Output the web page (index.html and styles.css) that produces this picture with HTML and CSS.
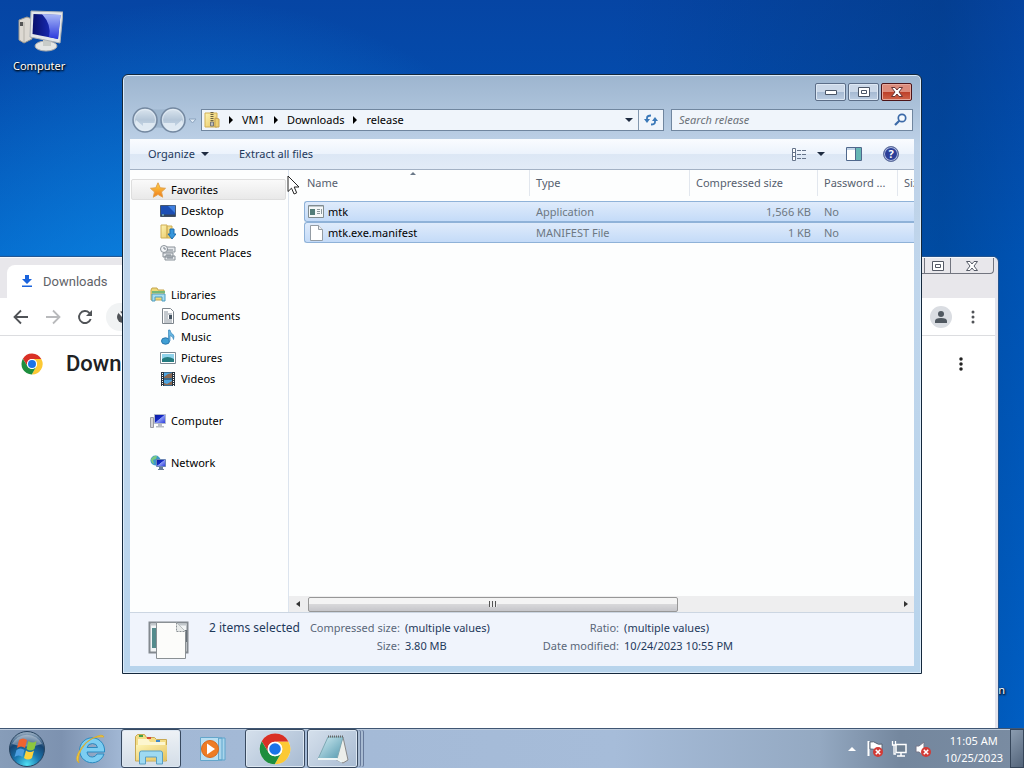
FILE: index.html
```html
<!DOCTYPE html>
<html lang="en">
<head>
    <meta charset="UTF-8">
    <meta name="viewport" content="width=device-width, initial-scale=1.0">
    <title>release</title>
    <link rel="stylesheet" href="styles.css">
</head>
<body>
    <!-- Shared icons -->
    <svg class="defs" aria-hidden="true">
        <defs>
            <linearGradient id="screen" x1="0" y1="0" x2="1" y2="1">
                <stop offset="0" stop-color="#0a1a9c"/>
                <stop offset=".45" stop-color="#1428c4"/>
                <stop offset=".5" stop-color="#8c9cf4"/>
                <stop offset="1" stop-color="#2434dc"/>
            </linearGradient>
            <linearGradient id="folder" x1="0" y1="0" x2="1" y2="1">
                <stop offset="0" stop-color="#fdf4b4"/>
                <stop offset="1" stop-color="#e6c25c"/>
            </linearGradient>
            <linearGradient id="orange" x1="0" y1="0" x2="0" y2="1">
                <stop offset="0" stop-color="#ffd94a"/>
                <stop offset="1" stop-color="#f07818"/>
            </linearGradient>
            <linearGradient id="silver" x1="0" y1="0" x2="0" y2="1">
                <stop offset="0" stop-color="#dde7f0"/>
                <stop offset=".5" stop-color="#b4c6d8"/>
                <stop offset="1" stop-color="#d3e2ef"/>
            </linearGradient>
            <radialGradient id="orb" cx=".5" cy=".95" r=".9">
                <stop offset="0" stop-color="#4fe0f4"/>
                <stop offset=".4" stop-color="#1a78b0"/>
                <stop offset=".75" stop-color="#164472"/>
                <stop offset="1" stop-color="#8fa6bc"/>
            </radialGradient>
            <linearGradient id="note" x1="0" y1="0" x2="1" y2="1">
                <stop offset="0" stop-color="#d4eef4"/>
                <stop offset="1" stop-color="#5298ae"/>
            </linearGradient>
            <linearGradient id="glass" x1="0" y1="0" x2="1" y2="0">
                <stop offset="0" stop-color="#07106c"/>
                <stop offset="1" stop-color="#2038d8"/>
            </linearGradient>
            <linearGradient id="glare" x1="0" y1="0" x2="0" y2="1">
                <stop offset="0" stop-color="#a8b8f8"/>
                <stop offset="1" stop-color="#2a38dc"/>
            </linearGradient>
        </defs>
        <symbol id="chrome" viewBox="0 0 48 48">
            <circle cx="24" cy="24" r="23" fill="#fff"/>
            <path d="M24 13h20.3A23 23 0 0 0 4.1 12.500L14.500 29.500A11 11 0 0 1 24 13z" fill="#d93025"/>
            <path d="M44.300 13H24a11 11 0 0 1 9.500 16.500L23.500 47A23 23 0 0 0 44.300 13z" fill="#fcc934"/>
            <path d="M4.100 12.500A23 23 0 0 0 23.500 47l10-17.500a11 11 0 0 1-19 0z" fill="#1e8e3e"/>
            <circle cx="24" cy="24" r="11" fill="#fff"/>
            <circle cx="24" cy="24" r="8.700" fill="#1a73e8"/>
        </symbol>
        <symbol id="alert" viewBox="0 0 9 9">
            <circle cx="4.500" cy="4.500" r="4.500" fill="#d33a35"/>
            <path d="M2.500 2.500l4 4m0-4l-4 4" stroke="#fff" stroke-width="1.400"/>
        </symbol>
    </svg>

    <main class="desktop">
        <div class="desktop-icon computer">
            <svg width="48" height="42" viewBox="0 0 48 42" aria-hidden="true">
                <path d="M4 10l8-3 5 2v20l-8 4-5-3z" fill="#ddd9d2" stroke="#9b9890"/>
                <path d="M9 12v20" stroke="#b5b2aa"/><path d="M5 12h3v4H5z" fill="#555"/>
                <ellipse cx="31" cy="36" rx="11" ry="5" fill="#e4e6e4" stroke="#aaa"/>
                <path d="M28 30h8v6h-8z" fill="#c8ccc8"/>
                <path d="M16 1l32 1-3 31-30-6z" fill="#e2e6ea" stroke="#aab0b4"/>
                <path d="M18.500 4l27 1-2.500 24-25.500-5z" fill="url(#glass)"/>
                <path d="M27 4l18.500 1-2.500 24-9-2q3-12-7-23z" fill="url(#glare)"/>
            </svg>
            <span>Computer</span>
        </div>
        <div class="desktop-icon recycle"><span>Recycle Bin</span></div>

        <!-- Browser window -->
        <section class="browser">
            <header class="tab-strip">
                <div class="tab">
                    <svg width="12" height="13" viewBox="0 0 12 13" aria-hidden="true"><path d="M4 0h4v4h3L6 9 1 4h3zM1 10.500h10V12H1z" fill="#1a63dc"/></svg>
                    <span>Downloads</span>
                </div>
                <div class="browser-controls">
                    <button type="button" aria-label="Minimize"></button>
                    <button type="button" aria-label="Maximize"><svg width="12" height="10" viewBox="0 0 12 10"><path d="M.5.5h11v9H.5zM3.500 3.500h5v3h-5z" fill="#fff" stroke="#555a66"/></svg></button>
                    <button type="button" aria-label="Close" class="wide"><svg width="12" height="10" viewBox="0 0 12 10"><path d="M.5.5h3.500l2 2.500 2-2.500h3.500L8 5l3.500 4.500H8L6 7 4 9.500H.5L4 5z" fill="#fff" stroke="#555a66"/></svg></button>
                </div>
            </header>
            <div class="browser-bar">
                <button type="button" aria-label="Back"><svg width="16" height="16" viewBox="0 0 16 16"><path d="M15 8H2M8 1.500L1.500 8 8 14.500" fill="none" stroke="#505357" stroke-width="1.800"/></svg></button>
                <button type="button" aria-label="Forward"><svg width="16" height="16" viewBox="0 0 16 16"><path d="M1 8h13M8 1.500L14.500 8 8 14.500" fill="none" stroke="#b9babc" stroke-width="1.800"/></svg></button>
                <button type="button" aria-label="Reload"><svg width="16" height="16" viewBox="0 0 16 16"><path d="M13.700 10A6 6 0 1 1 12.300 3.800L14 5.500" fill="none" stroke="#505357" stroke-width="1.900"/><path d="M15 1v6H9z" fill="#505357"/></svg></button>
                <div class="omnibox"><svg width="14" height="14" viewBox="0 0 14 14" aria-hidden="true"><circle cx="7" cy="7" r="6" fill="#505357"/><path d="M3 2l8 9" stroke="#f1f3f4" stroke-width="2"/></svg></div>
                <button type="button" aria-label="Profile" class="avatar"><svg width="14" height="14" viewBox="0 0 14 14"><circle cx="7" cy="4" r="3" fill="#505860"/><path d="M1 13v-2q0-3 6-3t6 3v2z" fill="#505860"/></svg></button>
                <button type="button" aria-label="Menu" class="menu"><svg width="4" height="14" viewBox="0 0 4 14"><path d="M2 2h0M2 7h0M2 12h0" stroke="#505357" stroke-width="3" stroke-linecap="round"/></svg></button>
            </div>
            <div class="page-header">
                <svg width="22" height="22" aria-hidden="true"><use href="#chrome"/></svg>
                <h1>Downloads</h1>
                <button type="button" aria-label="More actions"><svg width="4" height="14" viewBox="0 0 4 14"><path d="M2 2h0M2 7h0M2 12h0" stroke="#222" stroke-width="3.500" stroke-linecap="round"/></svg></button>
            </div>
        </section>

        <!-- Explorer window -->
        <section class="explorer">
            <div class="titlebar">
                <button type="button" aria-label="Minimize"><svg width="12" height="6" viewBox="0 0 12 6"><path d="M.5 1.500h11v4H.5z" fill="#fff" stroke="#4a5566"/></svg></button>
                <button type="button" aria-label="Maximize"><svg width="12" height="10" viewBox="0 0 12 10"><path d="M.5.5h11v9H.5zM3.500 3.500h5v3h-5z" fill="#fff" stroke="#4a5566"/></svg></button>
                <button type="button" aria-label="Close" class="close"><svg width="12" height="10" viewBox="0 0 12 10"><path d="M.5.5h3.500l2 2.500 2-2.500h3.500L8 5l3.500 4.500H8L6 7 4 9.500H.5L4 5z" fill="#fff" stroke="#693434"/></svg></button>
            </div>

            <div class="nav-row">
                <div class="history">
                    <svg width="66" height="28" viewBox="0 0 66 28" aria-hidden="true">
                        <path d="M12 2q15 3 30 0v22q-15-5-30 0z" fill="#9db5cd"/>
                        <circle cx="14" cy="14" r="12" fill="url(#silver)" stroke="#7488a0" stroke-width="1.500"/>
                        <circle cx="42" cy="14" r="12" fill="url(#silver)" stroke="#7488a0" stroke-width="1.500"/>
                        <path d="M5 14l7 6v-3h12q-4 8-10 8T4 18zM51 14l-7 6v-3H32q4 8 10 8t10-7z" fill="#dfe9f2"/>
                        <circle cx="14" cy="14" r="10.500" fill="none" stroke="#e7f0f7" opacity=".7"/>
                        <circle cx="42" cy="14" r="10.500" fill="none" stroke="#e7f0f7" opacity=".7"/>
                        <path d="M58 13h7l-3.500 4z" fill="#dfeaf5" stroke="#8ba3be"/>
                    </svg>
                </div>
                <div class="address">
                    <svg width="16" height="16" viewBox="0 0 16 16" aria-hidden="true"><path d="M1 1h12v14H1z" fill="url(#folder)" stroke="#d3b055"/><path d="M11 6l4 1v8h-4z" fill="#edcf70" stroke="#c4a050"/><path d="M8 0v14" stroke="#6b6141" stroke-width="3" stroke-dasharray="1 1"/><path d="M6.500 10h3v4h-3z" fill="#bbb" stroke="#777"/></svg>
                    <i class="crumb-arrow"></i>
                    <button type="button">VM1</button>
                    <i class="crumb-arrow"></i>
                    <button type="button">Downloads</button>
                    <i class="crumb-arrow"></i>
                    <button type="button">release</button>
                    <i class="down-arrow"></i>
                    <button type="button" class="refresh" aria-label="Refresh"><svg width="14" height="14" viewBox="0 0 14 14"><path d="M3 8V5q0-2.500 4-2.500M11 6v3q0 2.500-4 2.500" fill="none" stroke="#3a78b8" stroke-width="1.800"/><path d="M0 6h6L3 10zM8 8h6l-3-4z" fill="#3a78b8"/></svg></button>
                </div>
                <div class="search">
                    <input type="search" placeholder="Search release" aria-label="Search release">
                    <svg width="13" height="13" viewBox="0 0 13 13" aria-hidden="true"><circle cx="8" cy="5" r="3.700" fill="#f6fafe" stroke="#3c6aa8" stroke-width="1.700"/><path d="M5.300 7.700L1 12" stroke="#3c6aa8" stroke-width="2.200"/></svg>
                </div>
            </div>

            <div class="toolbar">
                <button type="button" class="organize">Organize<i class="down-arrow"></i></button>
                <button type="button">Extract all files</button>
                <div class="toolbar-icons">
                    <button type="button" aria-label="Views"><svg width="15" height="13" viewBox="0 0 15 13"><path d="M.5.5h3v12h-3zM.5 4.500h3M.5 8.500h3" fill="#fff" stroke="#66748a"/><path d="M5 2.500h10M5 6.500h10M5 10.500h10" stroke="#66748a" stroke-dasharray="4 1"/></svg></button>
                    <button type="button" aria-label="More views"><i class="down-arrow"></i></button>
                    <button type="button" aria-label="Preview pane"><svg width="16" height="14" viewBox="0 0 16 14"><path d="M.5.5h15v13H.5z" fill="#fff" stroke="#50688c"/><path d="M1 1h9v2H1z" fill="#c3d5e8"/><path d="M9.500 1v12.500" stroke="#50688c"/><path d="M10 1h5v12h-5z" fill="#65b6b4"/></svg></button>
                    <button type="button" aria-label="Help" class="help">?</button>
                </div>
            </div>

            <div class="panes">
                <nav class="sidebar">
                    <a href="#" class="group active"><svg width="16" height="16" viewBox="0 0 16 16"><path d="M8 .8l2.200 5 5.300.5-4 3.600 1.200 5.300L8 12.400l-4.700 2.800 1.200-5.300-4-3.600 5.300-.5z" fill="url(#orange)" stroke="#e2a04c"/></svg>Favorites</a>
                    <a href="#"><svg width="16" height="16" viewBox="0 0 16 16"><path d="M.5 2.500h15v11H.5z" fill="#1c4fb4" stroke="#46586e"/><path d="M8 3l7-.5V10z" fill="#3d7fe0"/><path d="M1 12.500h14" stroke="#36465c" stroke-width="2"/><path d="M2 12h2" stroke="#8de0e8"/></svg>Desktop</a>
                    <a href="#"><svg width="16" height="16" viewBox="0 0 16 16"><path d="M1 1h6v13H1zM7 2h5v12H7z" fill="url(#folder)" stroke="#cfae55"/><path d="M10 5h4v5h2l-4 5-4-5h2z" fill="#3797dc" stroke="#1d6dad"/></svg>Downloads</a>
                    <a href="#"><svg width="16" height="16" viewBox="0 0 16 16"><path d="M5 2h10v5H5zM3 8h10v4H3zM5 11h10v4H5z" fill="#e6e9ec" stroke="#8a9299"/><circle cx="4" cy="4" r="3.500" fill="#f4f6f8" stroke="#8a9299"/><path d="M4 2v2h2M7 5h6M6 10h5M7 13h6" stroke="#77808a" fill="none"/></svg>Recent Places</a>

                    <a href="#" class="group"><svg width="16" height="16" viewBox="0 0 16 16"><path d="M1 3l1-2h5l1 2h6v10H1z" fill="#efd978" stroke="#c4a54e"/><path d="M2 5h13" stroke="#75b87a" stroke-width="2"/><path d="M2 7h13v7h-3v-4H5v4H2z" fill="#a8ddf0" stroke="#4f9dc0"/></svg>Libraries</a>
                    <a href="#"><svg width="16" height="16" viewBox="0 0 16 16"><path d="M2.500.5h8l3 3v12h-11z" fill="#fff" stroke="#7d858c"/><path d="M4 4h4M4 6h8M4 12h8M4 14h8M4 8h4M4 10h4" stroke="#88929c"/><path d="M9 7h3v4H9z" fill="#465462"/></svg>Documents</a>
                    <a href="#"><svg width="16" height="16" viewBox="0 0 16 16"><ellipse cx="5.500" cy="12" rx="4" ry="3.200" fill="#3f9fd4" stroke="#2b76ac"/><path d="M8.500 12V1h1.500q0 2.500 2.500 4t1 5.500q0-3-3.500-4V12z" fill="#65b5e0" stroke="#3985ba" stroke-width=".7"/></svg>Music</a>
                    <a href="#"><svg width="16" height="16" viewBox="0 0 16 16"><path d="M.5 2.500h15v11H.5z" fill="#fff" stroke="#7c8a94"/><path d="M2 4h12v8H2z" fill="#8fd2ea"/><path d="M2 9q5-4 12 0v3H2z" fill="#257c80"/></svg>Pictures</a>
                    <a href="#"><svg width="16" height="16" viewBox="0 0 16 16"><path d="M1 1h14v14H1z" fill="#26313c"/><path d="M4 1.500h8v6H4zM4 8.500h8v6H4z" fill="#4ea5e0"/><path d="M4 6l4-3 4-1v5H4zM4 12l3 1 5-3v4H4z" fill="#8a6a54"/><path d="M2.500 2v13M13.500 2v13" stroke="#fff" stroke-dasharray="1 1"/></svg>Videos</a>

                    <a href="#" class="group"><svg width="16" height="16" viewBox="0 0 16 16"><path d="M.5 4.500h3v10h-3z" fill="#d4d4d8" stroke="#989aa2"/><path d="M4.500 1.500h11v9h-11z" fill="url(#screen)" stroke="#b0b8ca"/><path d="M8 11h4v2h2v1.500H6V13h2z" fill="#b8bcc4"/></svg>Computer</a>

                    <a href="#" class="group"><svg width="16" height="16" viewBox="0 0 16 16"><circle cx="5.500" cy="5.500" r="5" fill="#3c98ca"/><path d="M1 4q3-4 6-3l-1 3-3 1 1 4q-3-1-3-5z" fill="#7cca80"/><path d="M6.500 4.500h9v7h-9z" fill="url(#screen)" stroke="#6c86b4"/><path d="M9 12h4v2h1v1H8v-1h1z" fill="#677e98"/></svg>Network</a>
                </nav>

                <div class="content">
                    <div class="files">
                        <table>
                            <thead>
                                <tr>
                                    <th class="col-name sorted">Name</th>
                                    <th class="col-type">Type</th>
                                    <th class="col-size">Compressed size</th>
                                    <th class="col-pass">Password ...</th>
                                    <th class="col-full">Size</th>
                                </tr>
                            </thead>
                            <tbody>
                                <tr>
                                    <td class="name"><svg width="16" height="14" viewBox="0 0 16 14"><path d="M.5.5h15v12H.5z" fill="#f5f8f8" stroke="#808c90"/><path d="M1 1.500h14" stroke="#c0c8cc"/><path d="M2 4h5v6H2z" fill="#527c78"/><path d="M9 4.500h3M9 6.500h3M9 8.500h3M13.500 4v5" stroke="#8c989c"/></svg>mtk</td>
                                    <td>Application</td>
                                    <td class="num">1,566 KB</td>
                                    <td>No</td>
                                    <td></td>
                                </tr>
                                <tr>
                                    <td class="name"><svg width="16" height="16" viewBox="0 0 16 16"><path d="M2.500.5h8l4 4v11h-12z" fill="#fff" stroke="#949ca4"/><path d="M10.500.5v4h4" fill="#eee" stroke="#949ca4"/></svg>mtk.exe.manifest</td>
                                    <td>MANIFEST File</td>
                                    <td class="num">1 KB</td>
                                    <td>No</td>
                                    <td></td>
                                </tr>
                            </tbody>
                        </table>
                    </div>
                    <div class="scrollbar">
                        <i class="scroll-left"></i>
                        <div class="track"><div class="thumb"></div></div>
                        <i class="scroll-right"></i>
                    </div>
                </div>
            </div>

            <footer class="details">
                <svg width="42" height="42" viewBox="0 0 42 42" aria-hidden="true">
                    <path d="M1.500 3.500h38v30h-38z" fill="#f2f5f6" stroke="#83898f" stroke-width="2"/>
                    <path d="M3 5.500h36" stroke="#c2c8cc" stroke-width="2"/><path d="M4 9h4v20H4z" fill="#548b8c"/>
                    <path d="M36 11h3v12h-3z" fill="#687078"/>
                    <path d="M8.500 3.500h20l9 9v27h-29z" fill="#fcfcfa" stroke="#8a9094"/>
                    <path d="M28.500 3.500v9h9" fill="#e8ebea" stroke="#8a9094" stroke-dasharray="2 1"/>
                </svg>
                <div class="selected">2 items selected</div>
                <dl>
                    <dt>Compressed size:</dt><dd>(multiple values)</dd>
                    <dt>Ratio:</dt><dd>(multiple values)</dd>
                    <dt>Size:</dt><dd>3.80 MB</dd>
                    <dt>Date modified:</dt><dd>10/24/2023 10:55 PM</dd>
                </dl>
            </footer>
        </section>

        <svg class="cursor" width="13" height="20" viewBox="0 0 13 20" aria-hidden="true"><path d="M1 1v15.500l3.500-3.300 2.600 5.800 2.600-1.200L7.200 12H12z" fill="#fff" stroke="#222"/></svg>
    </main>

    <footer class="taskbar">
        <button type="button" class="start" aria-label="Start">
            <svg width="38" height="38" viewBox="0 0 38 38">
                <circle cx="19" cy="19" r="17.500" fill="url(#orb)" stroke="#27435f"/>
                <path d="M4 14a16 14 0 0 1 30 0q-15 5-30 0z" fill="#fff" opacity=".35"/>
                <path d="M11 10q4-3 8 0l-2 8q-4-3-8 0z" fill="#ee6430"/>
                <path d="M20.500 11q4 3 8 0l-2 8q-4 3-8 0z" fill="#8cc63e"/>
                <path d="M8.500 20q4-3 8 0l-2 7q-4-3-8 0z" fill="#4c9ee0"/>
                <path d="M18 20.500q4 3 8 0l-2 7.500q-4 3-8 0z" fill="#fcd23c"/>
            </svg>
        </button>
        <button type="button" class="task ie" aria-label="Internet Explorer">
            <svg width="32" height="32" viewBox="0 0 32 32">
                <path d="M29 21A12.500 12.500 0 1 1 29.500 16v3H12q.5 5 5.500 5 3 0 4.500-3zM12 14.500h10.500q-.5-4-5-4t-5.500 4z" fill="#7ccdf2" stroke="#2b8ac0" fill-rule="evenodd"/>
                <path d="M4 30Q-2 26 7 14T29 4q-1-4-11 1-8 4-12 12T4 30z" fill="#fbd23c" stroke="#d8a92c" stroke-width=".8"/>
            </svg>
        </button>
        <button type="button" class="task open active" aria-label="Windows Explorer">
            <svg width="34" height="32" viewBox="0 0 34 32">
                <path d="M1.500 28V3.500l2-2h7l2 3h8l2 2h10V28z" fill="#f3dd86" stroke="#c8a852"/>
                <path d="M4 6h10l2 3h15v3H4z" fill="#fdf6cf"/>
                <path d="M5 3h4" stroke="#43a047" stroke-width="2"/><path d="M13 5h4" stroke="#d84a36" stroke-width="2"/><path d="M22 8h4" stroke="#3f88c8" stroke-width="2"/>
                <path d="M2 12h31v15H2z" fill="url(#folder)"/>
                <path d="M5.500 31V20q0-2 2-2h19q2 0 2 2v11h-6v-7h-11v7z" fill="#9edaf2" stroke="#5a9ec2"/>
            </svg>
        </button>
        <button type="button" class="task" aria-label="Media Player">
            <svg width="28" height="26" viewBox="0 0 28 26">
                <path d="M8 2h18v22H8zM6 2h17v22H6z" fill="#a9d5ec" stroke="#5fa5cc"/>
                <path d="M1.500 1.500h18v23h-18z" fill="#b9dff2" stroke="#64a6cb"/>
                <circle cx="11" cy="13" r="8.500" fill="#ee7c24" stroke="#d8691c"/>
                <path d="M8 7.500l8 5.500-8 5.500z" fill="#fff"/>
            </svg>
        </button>
        <button type="button" class="task open" aria-label="Google Chrome"><svg width="32" height="32"><use href="#chrome"/></svg></button>
        <button type="button" class="task open stacked" aria-label="Notepad">
            <svg width="34" height="30" viewBox="0 0 34 30">
                <path d="M27 3l5 23-5 3-8-4z" fill="#eceeea" stroke="#888"/>
                <path d="M12 3h15l-6 22H2z" fill="url(#note)" stroke="#7fa9b4"/>
                <path d="M12 2.500h15" stroke="#666" stroke-width="2" stroke-dasharray="1 1"/>
                <path d="M2 25h19l5 3" stroke="#edf6f6" stroke-width="2" fill="none"/>
            </svg>
        </button>
        <div class="tray">
            <i class="up-arrow"></i>
            <svg width="17" height="18" viewBox="0 0 17 18" aria-label="Action Center"><path d="M1.500 1v15" stroke="#fff" stroke-width="2"/><path d="M3 2q4-1 6 1t6 1v7q-4 0-6-1t-6-1z" fill="#fff" stroke="#5a6574"/><use href="#alert" x="6" y="7" width="10" height="10"/></svg>
            <svg width="17" height="18" viewBox="0 0 17 18" aria-label="Network"><path d="M5 4.500h10v8H5zM10 13v3M6 16h8" fill="#6f8092" stroke="#fff" stroke-width="1.500"/><path d="M1.500 1v4h3V1M3 5v9h2" fill="none" stroke="#fff" stroke-width="1.300"/></svg>
            <svg width="17" height="18" viewBox="0 0 17 18" aria-label="Volume"><path d="M1 6h3l5-4v14l-5-4H1z" fill="#fff" stroke="#778"/><use href="#alert" x="6" y="7" width="10" height="10"/></svg>
            <div class="clock">
                <div>11:05 AM</div>
                <div>10/25/2023</div>
            </div>
            <button type="button" class="show-desktop" aria-label="Show desktop"></button>
        </div>
    </footer>
</body>
</html>
```

FILE: styles.css
```css
/* General Styles */
* {
    box-sizing: border-box;
}

body {
    margin: 0;
    height: 100vh;
    display: flex;
    flex-direction: column;
    overflow: hidden;
    font-family: "Noto Sans", "Open Sans", sans-serif;
    font-size: 11px;
    line-height: 16px;
    color: #000;
}

button {
    font: inherit;
    color: inherit;
    background: none;
    border: 0;
    padding: 0;
    display: flex;
    align-items: center;
    justify-content: center;
}

svg {
    display: block;
    flex: none;
}

a {
    color: inherit;
    text-decoration: none;
}

.defs {
    position: absolute;
    width: 0;
    height: 0;
}

/* Desktop */
.desktop {
    position: relative;
    flex: 1;
    background:
        radial-gradient(ellipse 42% 60% at 20% 60%, rgba(20, 160, 250, 0.9), rgba(10, 120, 225, 0)),
        linear-gradient(90deg, rgba(0, 50, 120, 0) 60%, rgba(0, 50, 110, 0.35) 92%, rgba(0, 60, 140, 0.2)),
        linear-gradient(#0645a4, #0058bc 35%, #0066d0);
}

.desktop-icon {
    position: absolute;
    display: flex;
    flex-direction: column;
    align-items: center;
    gap: 6px;
    color: #fff;
    text-shadow: 1px 1px 2px #000, 0 1px 2px #000;
}

.computer {
    left: 13px;
    top: 10px;
}

.recycle {
    right: 19px;
    bottom: 30px;
}

/* Browser window */
.browser {
    position: absolute;
    left: 0;
    right: 26px;
    top: 257px;
    bottom: 0;
    background: #fff;
    border-top: 1px solid #f6f8fc;
    border-right: 3px solid #e4e4ec;
    border-top-right-radius: 5px;
    box-shadow: 0 0 1px 1px #27558c;
}

.tab-strip {
    height: 40px;
    display: flex;
    justify-content: space-between;
    background: #e8e7eb;
}

.tab {
    display: flex;
    align-items: center;
    gap: 10px;
    width: 240px;
    margin: 7px 0 0 7px;
    padding-left: 14px;
    background: #fff;
    border-radius: 8px 8px 0 0;
    color: #5f6368;
}

.tab span {
    font-family: Roboto, sans-serif;
    font-size: 13px;
}

.browser-controls {
    display: flex;
    height: 16px;
    margin-right: 1px;
    border: 1px solid #72757f;
    border-top: 0;
    border-radius: 0 0 4px 4px;
}

.browser-controls button {
    width: 26px;
    border-right: 1px solid #72757f;
}

.browser-controls .wide {
    width: 42px;
    border-right: 0;
}

.browser-bar {
    display: flex;
    align-items: center;
    gap: 16px;
    height: 38px;
    padding: 0 20px 0 13px;
    border-bottom: 1px solid #dcdde0;
}

.omnibox {
    flex: 1;
    height: 28px;
    margin-left: -3px;
    padding: 7px 10px;
    background: #f1f3f4;
    border-radius: 14px;
}

.avatar {
    width: 22px;
    height: 22px;
    border-radius: 50%;
    background: #dadde2;
}

.menu {
    margin-left: 3px;
}

.page-header {
    display: flex;
    align-items: center;
    gap: 23px;
    height: 56px;
    padding: 0 32px 0 21px;
}

.page-header h1 {
    flex: 1;
    margin: 0;
    font-family: Roboto, sans-serif;
    font-size: 22px;
    font-weight: 500;
    color: #202124;
}

/* Explorer window */
.explorer {
    position: absolute;
    left: 122px;
    right: 102px;
    top: 74px;
    bottom: 54px;
    display: flex;
    flex-direction: column;
    padding: 0 7px 7px;
    border: 1px solid #14283c;
    border-radius: 6px 6px 0 0;
    box-shadow: inset 0 0 0 1px #dcecfa;
    background: linear-gradient(#9db5cf, #bdd1e7 70px, #c0d6ec 200px, #b8d4ec);
}

.titlebar {
    display: flex;
    justify-content: flex-end;
    gap: 2px;
    height: 28px;
    padding: 8px 2px 0;
}

.titlebar button {
    width: 31px;
    height: 18px;
    border: 1px solid #5c6e88;
    border-radius: 2px;
    box-shadow: inset 0 0 0 1px #dde8f4;
    background: linear-gradient(#cbd8e8 50%, #a5b9d2 50%, #bccde2);
}

.titlebar .close {
    border-color: #4c1418;
    box-shadow: inset 0 0 0 1px #e6a89c;
    background: linear-gradient(#dc8c7c 50%, #bc3e28 50%, #d0644a);
}

.nav-row {
    display: flex;
    align-items: center;
    gap: 7px;
    height: 36px;
    padding: 0 1px 3px;
}

.history {
    width: 63px;
}

.address,
.search {
    display: flex;
    align-items: center;
    height: 22px;
    border: 1px solid #70869f;
    background: #f0f5fb;
}

.address {
    flex: 1;
    gap: 9px;
    padding-left: 2px;
}

.address .down-arrow {
    margin-left: auto;
    margin-right: -4px;
}

.refresh {
    width: 25px;
    height: 20px;
    border-left: 1px solid #8297ae;
}

.search {
    width: 242px;
    padding: 0 5px 0 7px;
}

.search input {
    flex: 1;
    min-width: 0;
    padding: 0;
    border: 0;
    outline: 0;
    background: none;
    font: inherit;
}

.search input::placeholder {
    color: #6b7178;
    font-style: italic;
}

/* Arrows */
.crumb-arrow {
    border: solid transparent;
    border-width: 4px 0 4px 4px;
    border-left-color: #000;
}

.down-arrow {
    border: solid transparent;
    border-width: 4px 4px 0;
    border-top-color: #1e2b40;
}

.up-arrow {
    border: solid transparent;
    border-width: 0 4px 4px;
    border-bottom-color: #fff;
}

/* Toolbar */
.toolbar {
    display: flex;
    align-items: center;
    gap: 30px;
    height: 31px;
    padding: 0 15px 0 18px;
    border-bottom: 1px solid #a3b1c4;
    background: linear-gradient(#fafcff, #ecf3fc 49%, #dce7f5 50%, #e2ebf7);
    color: #1e395b;
}

.organize {
    gap: 6px;
}

.toolbar-icons {
    display: flex;
    align-items: center;
    gap: 21px;
    margin-left: auto;
}

.toolbar-icons button:nth-child(2) {
    margin-left: -11px;
}

.help {
    width: 16px;
    height: 16px;
    border: 1px solid #60709c;
    border-radius: 50%;
    box-shadow: inset 0 0 0 1px #b4c0e0;
    background: #2c3f98;
    color: #fff;
    font-weight: bold;
}

/* Panes */
.panes {
    flex: 1;
    display: flex;
    min-height: 0;
    background: #fdfefe;
}

.sidebar {
    width: 159px;
    padding: 9px 2px 0 1px;
    border-right: 1px solid #dce4ee;
}

.sidebar a {
    display: flex;
    align-items: center;
    gap: 5px;
    height: 21px;
    padding-left: 29px;
}

.sidebar .group {
    margin-top: 21px;
    padding-left: 19px;
}

.sidebar .active {
    margin-top: 0;
    padding-left: 18px;
    border: 1px solid #dedede;
    border-radius: 2px;
    background: linear-gradient(#fafafa, #e9e9e9);
}

.content {
    flex: 1;
    min-width: 0;
    display: flex;
    flex-direction: column;
}

.files {
    flex: 1;
    overflow: hidden;
    padding-left: 15px;
}

table {
    width: 720px;
    table-layout: fixed;
    border-spacing: 0;
}

th {
    position: relative;
    height: 26px;
    padding: 0 6px;
    border-right: 1px solid #e2e7ee;
    font-weight: normal;
    text-align: left;
    color: #56606e;
}

.col-name {
    width: 226px;
    padding-left: 3px;
}

.col-type {
    width: 160px;
}

.col-size {
    width: 128px;
}

.col-pass {
    width: 80px;
}

/* Sort mark over the header */
.sorted::after {
    content: "";
    position: absolute;
    left: 47%;
    top: 2px;
    border: solid transparent;
    border-width: 0 3px 3px;
    border-bottom-color: #6a7888;
}

tbody::before {
    content: "";
    display: block;
    height: 5px;
}

td {
    height: 21px;
    padding: 0 7px 0 6px;
    border: solid #8fb2d8;
    border-width: 1px 0;
    background: linear-gradient(#dfebfb, #c4dbf8);
    line-height: 19px;
    color: #6d7883;
}

.name {
    display: flex;
    align-items: center;
    gap: 4px;
    padding-left: 3px;
    border-left-width: 1px;
    border-radius: 3px 0 0 3px;
    color: #000;
}

.num {
    text-align: right;
}

/* Scroll bar */
.scrollbar {
    display: flex;
    align-items: center;
    gap: 8px;
    height: 16px;
    padding: 0 6px 0 7px;
    background: #eeeeef;
}

.scroll-left,
.scroll-right {
    border: solid transparent;
    border-width: 3px 4px 3px 0;
    border-right-color: #333;
}

.scroll-right {
    border-width: 3px 0 3px 4px;
    border-left-color: #333;
}

.track {
    flex: 1;
}

.thumb {
    display: flex;
    align-items: center;
    justify-content: center;
    width: 63%;
    height: 15px;
    border: 1px solid #979797;
    border-radius: 2px;
    background: linear-gradient(#f4f4f4 45%, #d8d8da 50%, #c6c6ca);
}

.thumb::before {
    content: "";
    width: 8px;
    height: 6px;
    background: repeating-linear-gradient(90deg, #555 0 1px, #eee 1px 3px);
}

/* Details pane */
.details {
    display: flex;
    gap: 19px;
    height: 54px;
    padding: 6px 18px;
    border-top: 1px solid #ccd6e2;
    background: #f0f4fc;
    color: #1e395b;
}

.selected {
    font-size: 12px;
    line-height: 18px;
}

.details dl {
    display: grid;
    grid-template-columns: auto auto auto auto;
    align-content: start;
    column-gap: 5px;
    margin: 0 0 0 -9px;
    line-height: 18px;
}

.details dt {
    text-align: right;
    color: #5a6779;
}

.details dd {
    margin: 0 48px 0 0;
}

.cursor {
    position: absolute;
    left: 287px;
    top: 175px;
}

/* Taskbar */
.taskbar {
    position: relative;
    display: flex;
    align-items: center;
    height: 40px;
    padding-left: 8px;
    border-top: 1px solid #3f5673;
    box-shadow: inset 0 1px 0 #bccbdd;
    background: linear-gradient(90deg, #879db9, #7d92b0 6%, #a2b8d5 12%, #a6bcd9 60%, #94a9c2 80%, #74879e 88%, #7a8ca2);
    color: #fff;
}

.task {
    width: 60px;
    height: 39px;
    border-radius: 3px;
}

.ie {
    margin-left: 15px;
}

.open {
    border: 1px solid #38495f;
    box-shadow: inset 0 0 0 1px #dce7f2;
    background: linear-gradient(135deg, #d5e0ec, #a8bbd2);
}

.open + .open {
    width: 51px;
    margin-left: 2px;
}

.active {
    background: linear-gradient(#eef2f6, #d3dde7);
}

.task.active + .task {
    width: 64px;
}

.stacked {
    box-shadow: inset 0 0 0 1px #dce7f2, 3px 0 0 -1px #a8bbd2, 4px 0 0 -1px #66799a, 6px 0 0 -1px #a8bbd2, 7px 0 0 -1px #66799a;
}

.tray {
    display: flex;
    align-items: center;
    gap: 7px;
    height: 100%;
    margin-left: auto;
}

.up-arrow {
    margin-right: 4px;
}

.clock {
    margin: 0 0 0 5px;
    text-align: center;
    line-height: 17px;
}

.show-desktop {
    width: 14px;
    height: 100%;
    border: 1px solid #36465a;
    background: linear-gradient(135deg, #8b9cb0, #53647a);
}
```
